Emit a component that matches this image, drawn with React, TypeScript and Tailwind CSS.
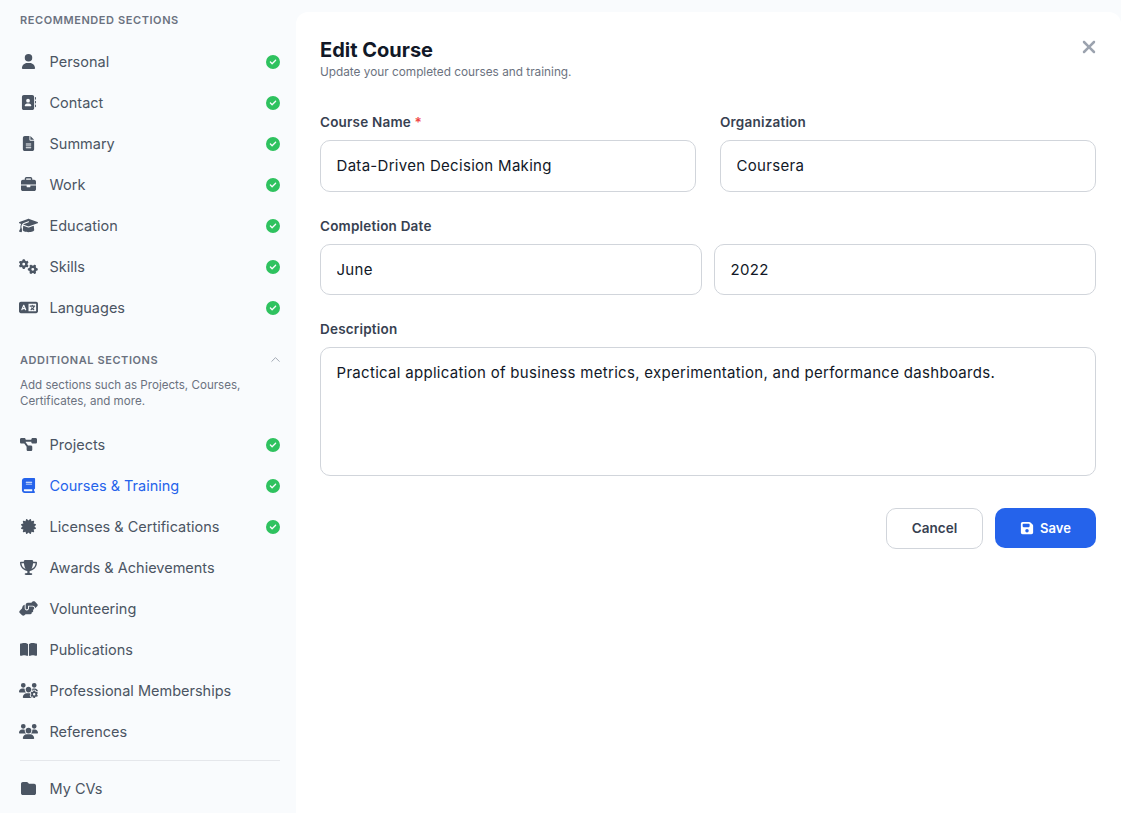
import type { ReactNode } from "react";
import { ChevronUp } from "lucide-react";
import {
  FaAddressBook,
  FaBook,
  FaBookOpen,
  FaBriefcase,
  FaCertificate,
  FaCircleCheck,
  FaDiagramProject,
  FaFileLines,
  FaFloppyDisk,
  FaFolder,
  FaGears,
  FaGraduationCap,
  FaHandshakeAngle,
  FaLanguage,
  FaTrophy,
  FaUser,
  FaUsers,
  FaUsersGear,
  FaXmark,
} from "react-icons/fa6";

function NavRow({
  icon,
  label,
  done,
  active,
}: {
  icon: ReactNode;
  label: string;
  done?: boolean;
  active?: boolean;
}) {
  return (
    <div
      className={`flex items-center h-[41px] ${active ? "text-[#2563eb]" : "text-[#4b5563]"}`}
    >
      <span className="flex w-[17px] justify-center">{icon}</span>
      <span className="ml-[12.5px] flex-1 text-[14.5px]">{label}</span>
      {done && <FaCircleCheck className="mr-[0.5px] text-[14px] text-[#2fc25f]" />}
    </div>
  );
}

function Label({ children }: { children: ReactNode }) {
  return (
    <label className="block h-[18px] text-[13.5px] leading-[18px] font-semibold tracking-[0.2px] text-[#374151]">
      {children}
    </label>
  );
}

const inputClass =
  "mt-[9px] block w-full rounded-[10px] border border-[#d1d5db] bg-white px-[15.5px] text-[15px] tracking-[0.3px] text-[#111827] outline-none";

export default function App() {
  return (
    <div className="flex h-[813px] overflow-hidden bg-[#f9fbfd] font-['Inter',sans-serif]">
      <aside className="w-[296px] shrink-0 pl-5 pr-4 pt-[13px]">
        <h2 className="text-[11px] leading-[14px] font-semibold tracking-[0.58px] text-[#6b7280]">
          RECOMMENDED SECTIONS
        </h2>
        <div className="mt-[14px]">
          <NavRow icon={<FaUser className="text-[15px]" />} label="Personal" done />
          <NavRow icon={<FaAddressBook className="text-[15px]" />} label="Contact" done />
          <NavRow icon={<FaFileLines className="text-[15px]" />} label="Summary" done />
          <NavRow icon={<FaBriefcase className="text-[15px]" />} label="Work" done />
          <NavRow icon={<FaGraduationCap className="shrink-0 text-[19px]" />} label="Education" done />
          <NavRow icon={<FaGears className="shrink-0 text-[19px]" />} label="Skills" done />
          <NavRow icon={<FaLanguage className="shrink-0 text-[19px]" />} label="Languages" done />
        </div>
        <div className="mt-[24px] flex items-center justify-between">
          <h2 className="text-[11px] leading-[14px] font-semibold tracking-[0.58px] text-[#6b7280]">
            ADDITIONAL SECTIONS
          </h2>
          <ChevronUp size={15} strokeWidth={1.5} className="mr-[-3px] text-[#9ca3af]" />
        </div>
        <p className="mt-[10px] text-[11.6px] leading-4 text-[#6b7280]">
          Add sections such as Projects, Courses,
          <br />
          Certificates, and more.
        </p>
        <div className="mt-[15px]">
          <NavRow icon={<FaDiagramProject className="shrink-0 text-[17px]" />} label="Projects" done />
          <NavRow icon={<FaBook className="text-[15px]" />} label="Courses & Training" done active />
          <NavRow icon={<FaCertificate className="text-[15px]" />} label="Licenses & Certifications" done />
          <NavRow icon={<FaTrophy className="shrink-0 text-[17px]" />} label="Awards & Achievements" />
          <NavRow icon={<FaHandshakeAngle className="shrink-0 text-[19px]" />} label="Volunteering" />
          <NavRow icon={<FaBookOpen className="shrink-0 text-[17px]" />} label="Publications" />
          <NavRow icon={<FaUsersGear className="shrink-0 text-[19px]" />} label="Professional Memberships" />
          <NavRow icon={<FaUsers className="shrink-0 text-[19px]" />} label="References" />
        </div>
        <div className="mt-[8px] border-t border-[#e5e7eb] pt-[7px]">
          <NavRow icon={<FaFolder className="text-[15px]" />} label="My CVs" />
        </div>
      </aside>

      <main className="mt-3 flex-1 rounded-t-xl bg-white pl-6 pr-[25px] pt-[27px]">
        <div className="flex items-start justify-between">
          <div>
            <h1 className="text-[20px] leading-[22px] font-bold text-[#111827]">Edit Course</h1>
            <p className="mt-[3px] text-[11.8px] leading-4 text-[#6b7280]">
              Update your completed courses and training.
            </p>
          </div>
          <FaXmark className="mt-[-2px] mr-[-3px] text-[20px] text-[#9ca3af]" />
        </div>

        <div className="mt-[33px] grid grid-cols-2 gap-6">
          <div>
            <Label>
              Course Name <span className="text-[#ef4444]">*</span>
            </Label>
            <input className={`${inputClass} h-[52px] pb-[2px]`} defaultValue="Data-Driven Decision Making" />
          </div>
          <div>
            <Label>Organization</Label>
            <input className={`${inputClass} h-[52px] pb-[2px]`} defaultValue="Coursera" />
          </div>
        </div>

        <div className="mt-[25px]">
          <Label>Completion Date</Label>
          <div className="grid grid-cols-2 gap-3">
            <input className={`${inputClass} h-[51px]`} defaultValue="June" />
            <input className={`${inputClass} h-[51px]`} defaultValue="2022" />
          </div>
        </div>

        <div className="mt-[25px]">
          <Label>Description</Label>
          <textarea
            className={`${inputClass} h-[129px] resize-none py-[14px] leading-[22px]`}
            defaultValue="Practical application of business metrics, experimentation, and performance dashboards."
          />
        </div>

        <div className="mt-8 flex justify-end gap-3">
          <button className="h-[41px] w-[97px] rounded-[10px] border border-[#d1d5db] bg-white text-[13.5px] font-semibold text-[#374151]">
            Cancel
          </button>
          <button className="flex h-10 w-[101px] items-center justify-center gap-[6px] rounded-[10px] bg-[#2563eb] text-[13px] leading-[22px] font-semibold text-white">
            <FaFloppyDisk className="text-[14px]" />
            Save
          </button>
        </div>
      </main>
    </div>
  );
}
